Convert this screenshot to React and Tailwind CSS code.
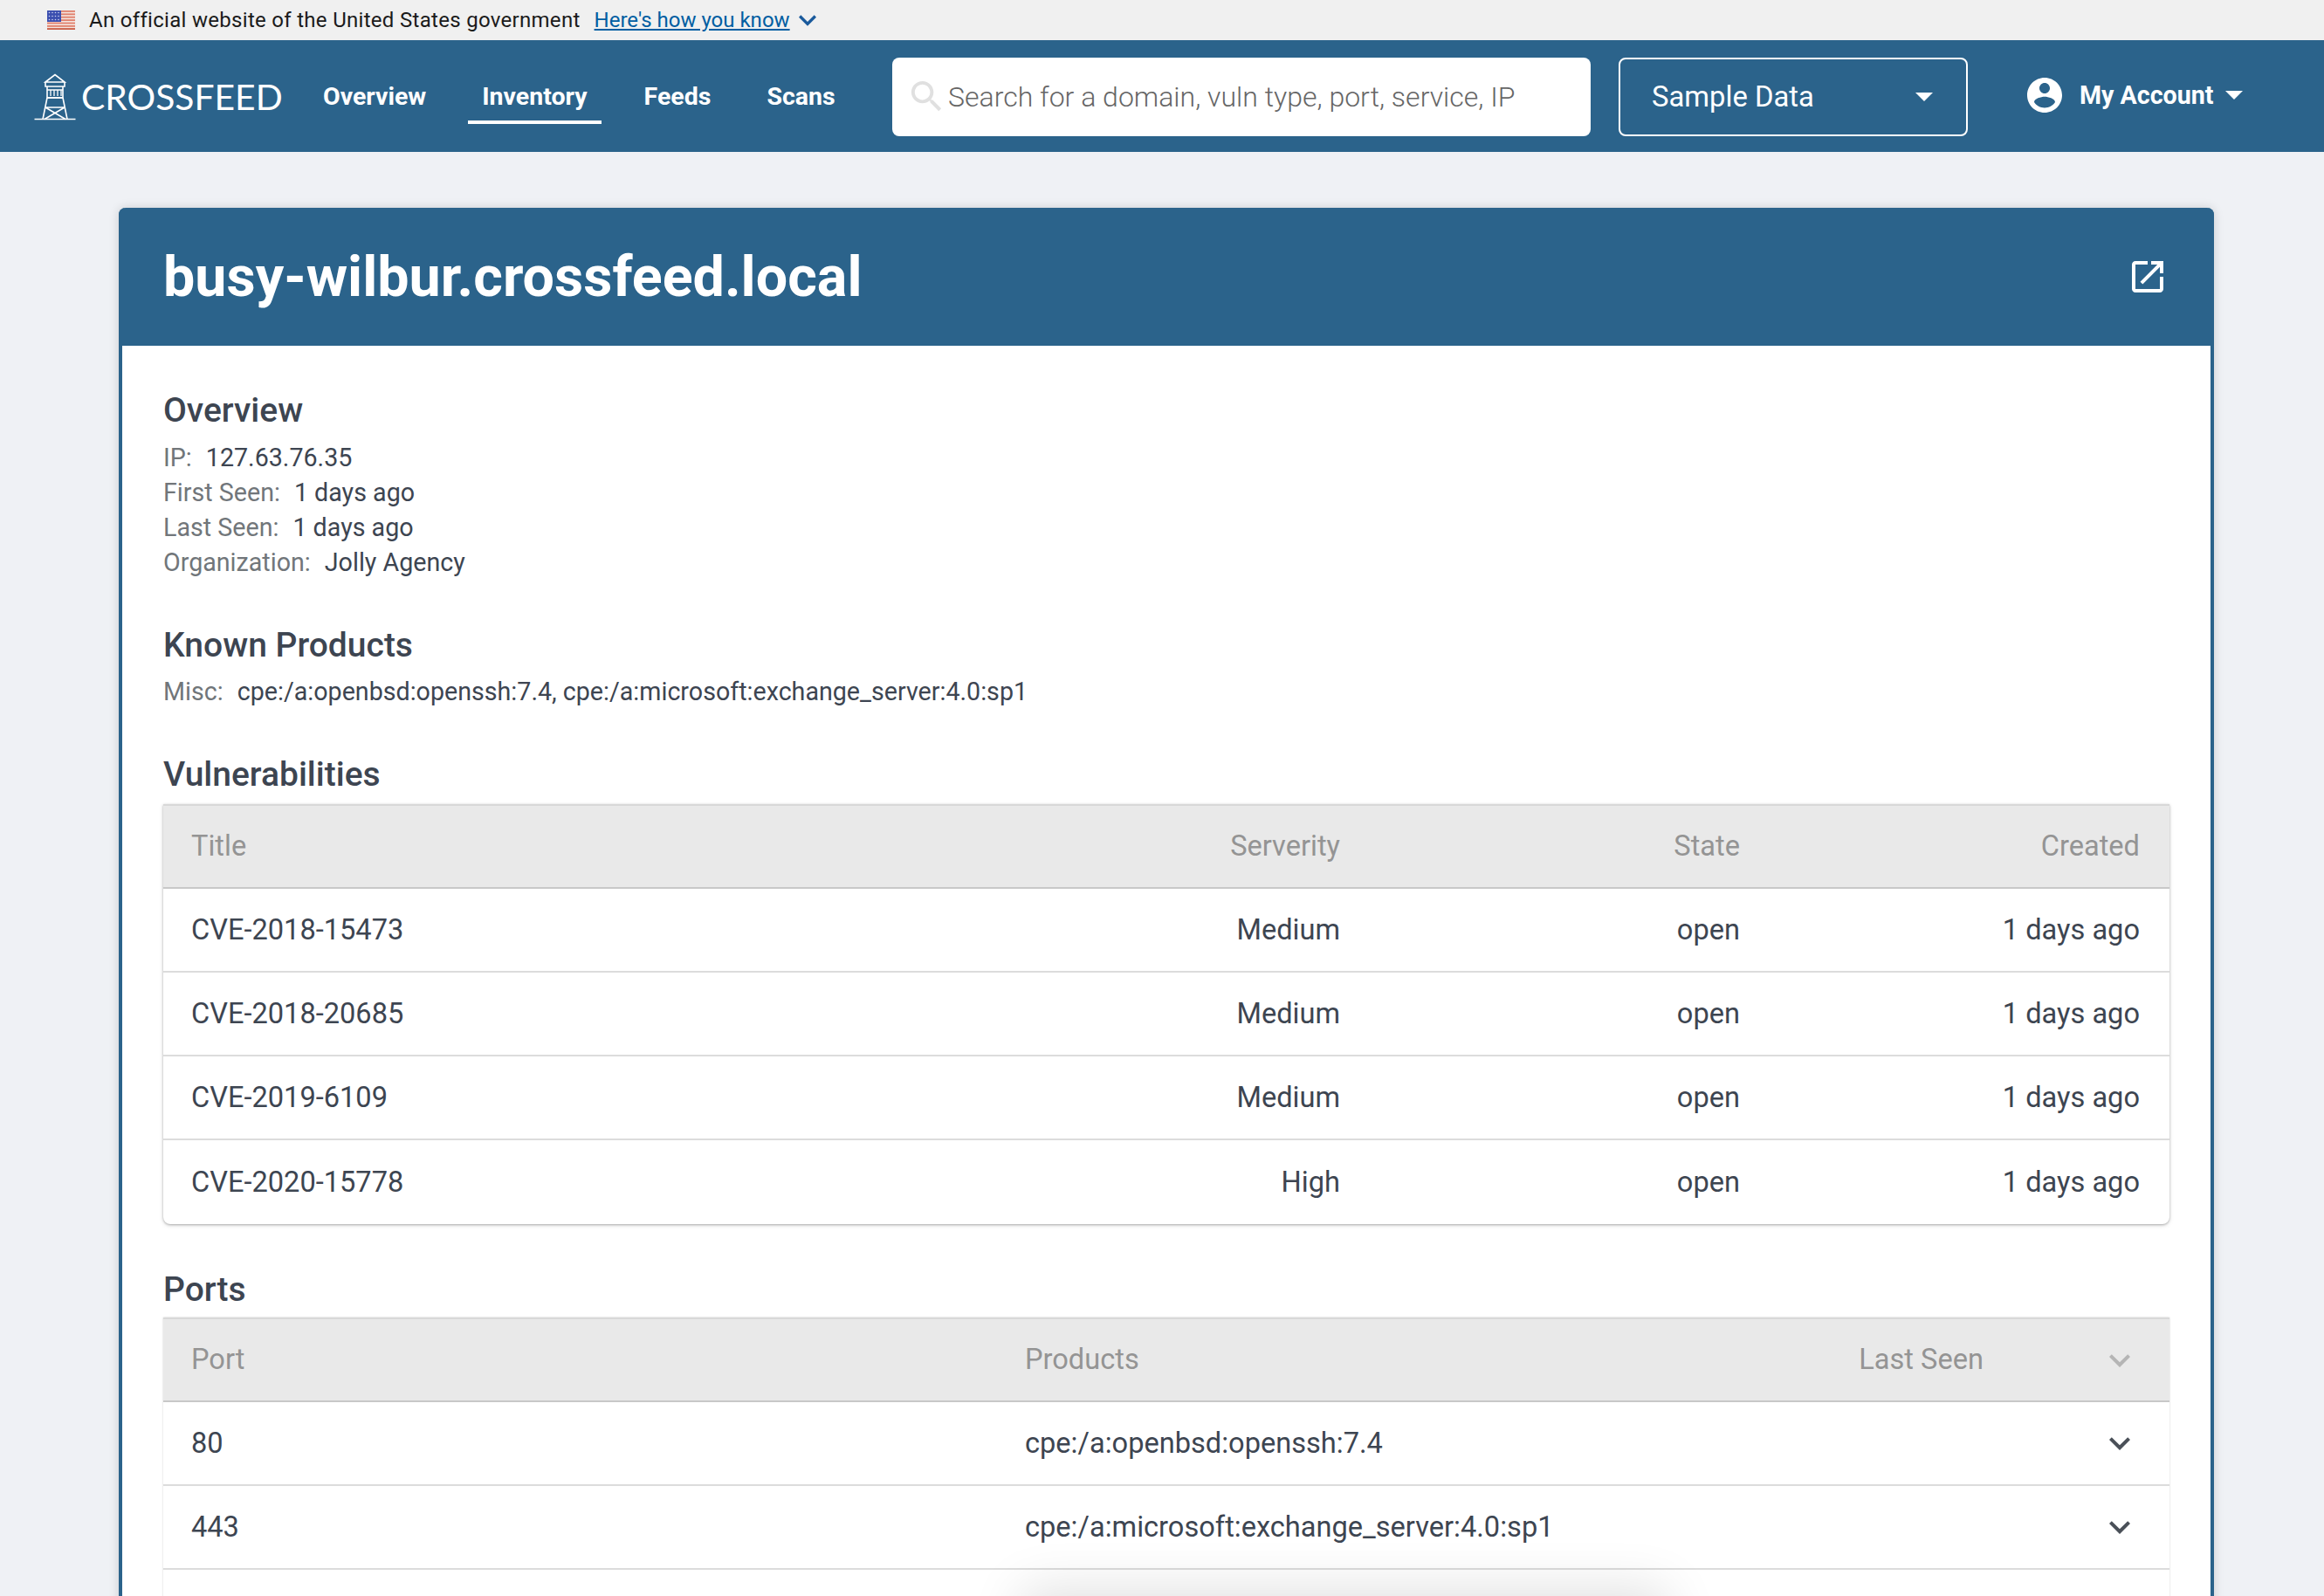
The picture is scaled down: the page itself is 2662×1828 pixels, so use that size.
import React from 'react';

const vulns = [
  ['CVE-2018-15473', 'Medium'],
  ['CVE-2018-20685', 'Medium'],
  ['CVE-2019-6109', 'Medium'],
  ['CVE-2020-15778', 'High'],
];

const ports = [
  ['80', 'cpe:/a:openbsd:openssh:7.4'],
  ['443', 'cpe:/a:microsoft:exchange_server:4.0:sp1'],
];

const details = [
  ['IP:', '127.63.76.35'],
  ['First Seen:', '1 days ago'],
  ['Last Seen:', '1 days ago'],
  ['Organization:', 'Jolly Agency'],
];

const Chevron = ({ className }) => (
  <svg viewBox="0 0 24 24" className={className} fill="currentColor">
    <path d="M16.59 8.59L12 13.17 7.41 8.59 6 10l6 6 6-6z" />
  </svg>
);

const Flag = () => (
  <svg viewBox="0 0 32 22" className="w-[32px] h-[22px] shrink-0">
    <rect width="32" height="22" fill="#f4e4df" />
    {[0, 3.4, 6.8, 10.2, 13.6, 17].map(y => (
      <rect key={y} y={y} width="32" height="1.8" fill="#e0806c" />
    ))}
    <rect y="20.2" width="32" height="1.8" fill="#c95a42" />
    <rect width="16" height="13" fill="#3b4fb0" />
    {[2.5, 6.5, 10.5].map(y => [2.5, 6, 9.5, 13].map(x => (
      <circle key={`${x}-${y}`} cx={x} cy={y} r="0.8" fill="#cdd2ee" />
    )))}
  </svg>
);

const Tower = () => (
  <svg viewBox="0 0 48 54" className="w-[48px] h-[54px] shrink-0" fill="none" stroke="#fff" strokeWidth="1.6">
    <path d="M0.5 52.5H47.5" />
    <path d="M13 10L24 1.5L35 10H13Z" />
    <path d="M13 10V15H35V10" />
    <path d="M15 15V28H33V15" />
    <path d="M15 19H33M19 19V26M23 19V26M27 19V26M31 19V26" strokeWidth="1.3" />
    <path d="M15 28H33" />
    <path d="M15 28L10 52.5M33 28L38 52.5M13 39L36 52.5M35 39L12 52.5M13 39H35" />
  </svg>
);

const SectionTitle = ({ className = '', children }) => (
  <h2 className={`text-[39px] leading-[44px] font-medium text-[#3d4551] ${className}`}>{children}</h2>
);

const App = () => {
  return (
    <div className="relative h-[1828px] overflow-hidden bg-[#eff1f5] font-['Roboto',sans-serif] text-[#3d4551]">
      {/* gov banner */}
      <div className="h-[46px] bg-[#f0f0f0] flex items-center pl-[54px] text-[24px] text-[#1b1b1b]">
        <Flag />
        <span className="ml-[16px] tracking-[0.3px]">An official website of the United States government</span>
        <a className="ml-[16px] text-[#005ea2] underline">Here's how you know</a>
        <Chevron className="w-[40px] h-[40px] text-[#1a5a9c]" />
      </div>

      {/* nav */}
      <header className="h-[128px] pt-[2px] bg-[#2b638b] flex items-center text-white">
        <div className="ml-[39px] flex items-center w-[284px] shrink-0">
          <Tower />
          <span className="ml-[6px] font-['Lato',sans-serif] text-[40.8px] leading-none">CROSSFEED</span>
        </div>
        <nav className="flex items-center h-full ml-[47px] w-[662px] shrink-0 text-[28.5px] font-bold">
          <a>Overview</a>
          <a className="ml-[48px] px-[16px] h-[62px] pt-[4px] flex items-center border-b-4 border-white">Inventory</a>
          <a className="ml-[49px]">Feeds</a>
          <a className="ml-[64px]">Scans</a>
        </nav>
        <div className="ml-[-10px] w-[800px] h-[90px] shrink-0 rounded-[8px] bg-white flex items-center pl-[16px]">
          <svg viewBox="0 0 24 24" className="w-[47px] h-[47px] -mt-[2px] shrink-0" fill="#e0e0e0">
            <path d="M15.5 14h-.79l-.28-.27C15.41 12.59 16 11.11 16 9.5 16 5.91 13.09 3 9.5 3S3 5.91 3 9.5 5.91 16 9.5 16c1.61 0 3.09-.59 4.23-1.57l.27.28v.79l5 4.99L20.49 19l-4.99-5zm-6 0C7.01 14 5 11.99 5 9.5S7.01 5 9.5 5 14 7.01 14 9.5 11.99 14 9.5 14z" />
          </svg>
          <span className="ml-[1px] text-[32px] font-light text-[#666666]">Search for a domain, vuln type, port, service, IP</span>
        </div>
        <div className="ml-[32px] w-[400px] h-[90px] shrink-0 rounded-[8px] border-2 border-white flex items-center justify-between pl-[36px] pr-[38px] text-[32.8px]">
          <span className="pt-[2px]">Sample Data</span>
          <span className="w-0 h-0 border-x-[10px] border-x-transparent border-t-[10px] border-t-white" />
        </div>
        <div className="ml-[64px] flex items-center -mt-[4px]">
          <svg viewBox="0 0 24 24" className="w-[48px] h-[48px]" fill="#fff">
            <path d="M12 2C6.48 2 2 6.48 2 12s4.48 10 10 10 10-4.48 10-10S17.52 2 12 2zm0 3c1.66 0 3 1.34 3 3s-1.34 3-3 3-3-1.34-3-3 1.34-3 3-3zm0 14.2c-2.5 0-4.71-1.28-6-3.22.03-1.99 4-3.08 6-3.08 1.99 0 5.97 1.09 6 3.08-1.29 1.94-3.5 3.22-6 3.22z" />
          </svg>
          <span className="ml-[16px] text-[28.6px] font-bold">My Account</span>
          <span className="ml-[14px] w-0 h-0 border-x-[10px] border-x-transparent border-t-[10px] border-t-white" />
        </div>
      </header>

      {/* domain card */}
      <div className="mt-[64px] mx-[136px] w-[2400px] rounded-[8px] border-x-4 border-[#2b638b] bg-white shadow-[0_0_12px_rgba(0,0,0,0.15)]">
        <div className="-mx-[4px] h-[158px] rounded-t-[8px] bg-[#2b638b] flex items-center justify-between pl-[51px] pr-[52px] text-white">
          <h1 className="text-[64.6px] font-bold leading-none">busy-wilbur.crossfeed.local</h1>
          <svg viewBox="0 0 24 24" className="w-[48px] h-[48px]" fill="#fff">
            <path d="M19 19H5V5h7V3H5c-1.11 0-2 .9-2 2v14c0 1.1.89 2 2 2h14c1.1 0 2-.9 2-2v-7h-2v7zM14 3v2h3.59l-9.83 9.83 1.41 1.41L19 6.41V10h2V3h-7z" />
          </svg>
        </div>

        <div className="pt-[52px] pl-[47px] pr-[47px] pb-[200px]">
          <SectionTitle>Overview</SectionTitle>
          <div className="mt-[12px] text-[28.65px] leading-[40px]">
            {details.map(([label, value]) => (
              <div key={label}>
                <span className="text-[#71767a]">{label}</span>
                <span className="ml-[16px]">{value}</span>
              </div>
            ))}
          </div>

          <SectionTitle className="mt-[53px]">Known Products</SectionTitle>
          <div className="mt-[11px] text-[28.65px] leading-[40px]">
            <span className="text-[#71767a]">Misc:</span>
            <span className="ml-[16px]">cpe:/a:openbsd:openssh:7.4, cpe:/a:microsoft:exchange_server:4.0:sp1</span>
          </div>

          <SectionTitle className="mt-[53px]">Vulnerabilities</SectionTitle>
          <div className="mt-[12px] rounded-b-[8px] bg-white shadow-[0_1px_3px_rgba(0,0,0,0.3),0_2px_6px_rgba(0,0,0,0.08)] text-[32.6px]">
            <div className="h-[97px] bg-[#e9e9e9] border-t-2 border-t-[#d8d8d8] border-b-2 border-b-[#c8c8c8] grid grid-cols-[1fr_458px_458px_458px] items-center text-[#949494]">
              <div className="pl-[32px]">Title</div>
              <div className="pr-[34px] text-right">Serverity</div>
              <div className="pr-[34px] text-right">State</div>
              <div className="pr-[34px] text-right">Created</div>
            </div>
            {vulns.map(([title, severity], i) => (
              <div key={title} className={`h-[96px] grid grid-cols-[1fr_458px_458px_458px] items-center ${i < 3 ? 'border-b-2 border-b-[#dcdcdc]' : ''}`}>
                <div className="pl-[32px]">{title}</div>
                <div className="pr-[34px] text-right">{severity}</div>
                <div className="pr-[34px] text-right">open</div>
                <div className="pr-[34px] text-right">1 days ago</div>
              </div>
            ))}
          </div>

          <SectionTitle className="mt-[53px]">Ports</SectionTitle>
          <div className="mt-[10px] bg-white shadow-[0_0_2px_rgba(0,0,0,0.2)] text-[32.6px]">
            <div className="h-[97px] bg-[#e9e9e9] border-t-2 border-t-[#d8d8d8] border-b-2 border-b-[#c8c8c8] grid grid-cols-[955px_1fr_300px_179px] items-center text-[#949494]">
              <div className="pl-[32px]">Port</div>
              <div className="pl-[32px]">Products</div>
              <div className="pr-[34px] text-right">Last Seen</div>
              <Chevron className="ml-[98px] w-[48px] h-[48px] text-[#b5b5b5]" />
            </div>
            {ports.map(([port, products]) => (
              <div key={port} className="h-[96px] border-b-2 border-b-[#dcdcdc] grid grid-cols-[955px_1fr_300px_179px] items-center">
                <div className="pl-[32px]">{port}</div>
                <div className="pl-[32px]">{products}</div>
                <div />
                <Chevron className="ml-[98px] w-[48px] h-[48px] text-[#4a5058]" />
              </div>
            ))}
            <div className="h-[96px]" />
          </div>
        </div>
      </div>

      {/* faint toast shadow rising from below the bottom edge */}
      <div className="absolute left-[1190px] top-[1840px] w-[700px] h-[80px] bg-[#eeeeee] shadow-[0_0_60px_20px_rgba(0,0,0,0.12)]" />
    </div>
  );
};

export default App;
